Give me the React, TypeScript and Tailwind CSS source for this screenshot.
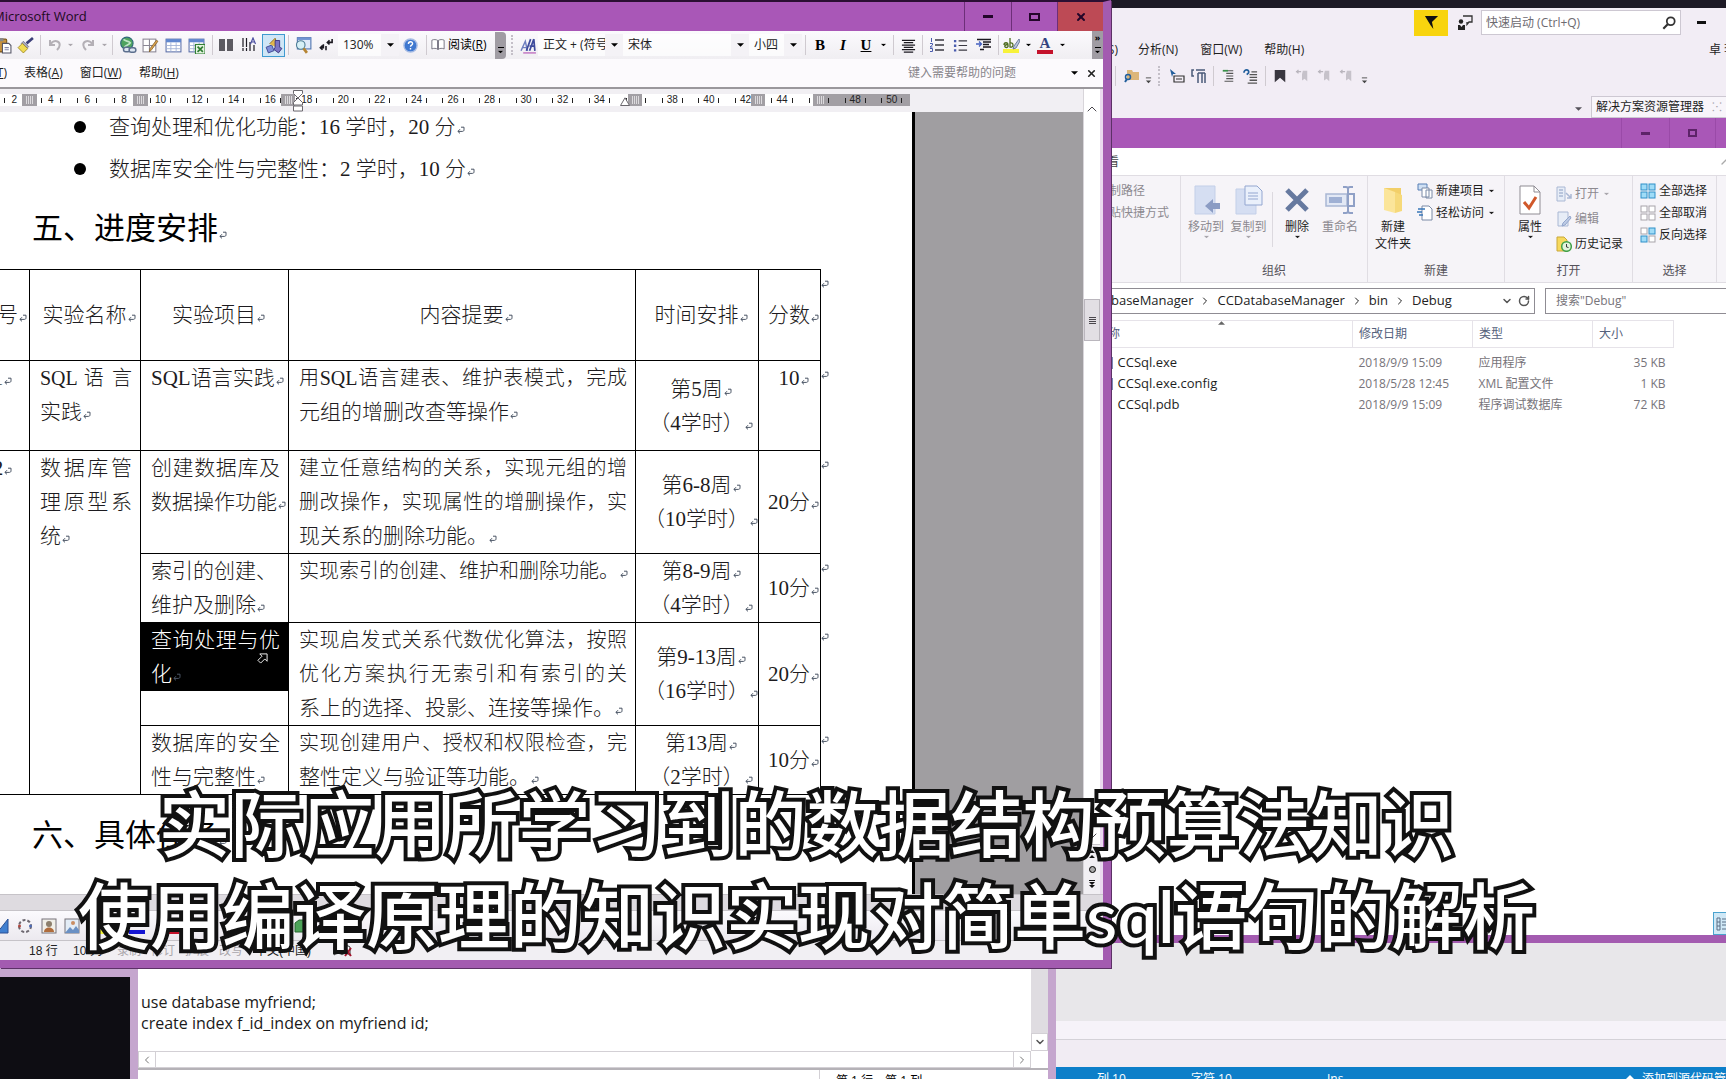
import React from "react";
import { Search, X, ChevronDown, ChevronUp, ChevronLeft, ChevronRight, RotateCw } from "lucide-react";

type Kids = { children?: React.ReactNode; className?: string };

const Svg = ({ children, className = "h-4 w-4", box = "0 0 16 16" }: Kids & { box?: string }) => (
  <svg viewBox={box} className={"shrink-0 " + className} fill="none" aria-hidden="true">
    {children}
  </svg>
);

const Caret = ({ className = "text-black" }: Kids) => (
  <svg viewBox="0 0 8 4" className={"h-1 w-[7px] shrink-0 " + className} aria-hidden="true">
    <path d="M0 0h8L4 4z" fill="currentColor" />
  </svg>
);

/* Paragraph mark shown after each paragraph */
const Mark = () => (
  <svg viewBox="0 0 8 8" className="-mr-2 ml-px inline-block h-2 w-2 align-baseline text-gray-600" fill="none" aria-hidden="true">
    <path d="M4 1.2h3v2.6c0 1-.6 1.6-1.6 1.6H1M3 3.2L.9 5.4 3 7.4" stroke="currentColor" strokeWidth="1" />
  </svg>
);

/* ---------- Word toolbar ---------- */

const Sep = ({ className = "w-2" }: Kids) => (
  <span className={"flex h-5 shrink-0 justify-center " + className}>
    <span className="w-px bg-[#cfcad0]" />
  </span>
);

const Tool = ({ label, className, children }: Kids & { label: string }) => (
  <button aria-label={label} className={"flex h-[23px] shrink-0 items-center justify-center " + className}>
    {children}
  </button>
);

const Undo = ({ flip = false }: { flip?: boolean }) => (
  <Svg className={flip ? "h-4 w-4 -scale-x-100" : "h-4 w-4"}>
    <path d="M3 3v5h5M3.5 7.5C5 4.500 8 3.500 10.500 4.500c3 1.300 3 5-.5 8.500" stroke="#b4b0b6" strokeWidth="2" />
  </Svg>
);

const Grid = ({ children }: Kids) => (
  <Svg className="h-[17px] w-[17px]">
    <rect x="1" y="2" width="14" height="12" fill="#fff" stroke="#5b6fa8" />
    <rect x="1" y="2" width="14" height="3" fill="#5f86cf" />
    <path d="M1 8h14M1 11h14M5.500 5v9M10.500 5v9" stroke="#9fb0d6" strokeWidth=".8" />
    {children}
  </Svg>
);

const Combo = ({ label, value, className }: { label: string; value: string; className: string }) => (
  <label className={"relative flex h-[22px] shrink-0 items-center " + className}>
    <select aria-label={label} className="h-full w-full appearance-none bg-white/70 pl-[5px] text-[12px] text-[#222] outline-none">
      <option>{value}</option>
    </select>
    <span className="pointer-events-none absolute inset-y-0 right-0 flex w-[18px] items-center justify-center bg-[#f4f2f6]">
      <Caret />
    </span>
  </label>
);

function WordToolbar() {
  return (
    <div className="flex h-[28px] items-center overflow-hidden bg-gradient-to-b from-[#fbfafd] to-[#f0eef2]">
      <Tool label="粘贴" className="w-[14px]">
        <Svg className="-ml-2 h-[17px] w-[17px]">
          <rect x="1" y="2" width="10" height="12" rx="1" fill="#c8923c" stroke="#7a5618" />
          <rect x="4" y="1" width="4" height="3" fill="#888" />
          <path d="M7 6h6l2 2v7H7z" fill="#fff" stroke="#556" />
          <path d="M9 10h4M9 12h4" stroke="#88a" />
        </Svg>
      </Tool>
      <Tool label="格式刷" className="w-[22px]">
        <Svg className="h-[17px] w-[17px]">
          <path d="M15 1l-6 5" stroke="#3b3f78" strokeWidth="2.500" />
          <path d="M6 4l5 5-2 2-5-5z" fill="#aab" stroke="#557" strokeWidth=".6" />
          <path d="M5 6l5 5-4 4-5-5z" fill="#f1dc55" stroke="#9c8524" strokeWidth=".8" />
        </Svg>
      </Tool>
      <Sep />
      <Tool label="撤消" className="w-[21px]"><Undo /></Tool>
      <Tool label="撤消列表" className="w-[10px]"><Caret className="scale-75 text-[#aaa6ac]" /></Tool>
      <Tool label="恢复" className="w-[25px]"><Undo flip /></Tool>
      <Tool label="恢复列表" className="w-[8px]"><Caret className="scale-75 text-[#aaa6ac]" /></Tool>
      <Sep />
      <Tool label="插入超链接" className="w-[23px]">
        <Svg className="h-[18px] w-[18px]">
          <circle cx="7" cy="6.500" r="5.500" fill="#4fa35f" stroke="#2f6a7a" />
          <path d="M4 3c2 2 4 1 6 3-1 2-4 2-5 4" stroke="#bfe6c6" strokeWidth="1.500" />
          <rect x="4" y="10" width="6" height="4" rx="2" stroke="#5c6f8e" strokeWidth="1.300" fill="#dde6f2" />
          <rect x="9" y="10.500" width="6" height="4" rx="2" stroke="#5c6f8e" strokeWidth="1.300" fill="#dde6f2" />
        </Svg>
      </Tool>
      <Tool label="表格和边框" className="w-[23px]">
        <Svg className="h-[17px] w-[17px]">
          <rect x="1" y="2" width="12" height="12" fill="#fff" stroke="#8a8694" />
          <path d="M7 2v12M1 8h12" stroke="#8a8694" />
          <path d="M15 4l-6 8-2 2 .5-3 6-8z" fill="#dba34e" stroke="#7d5a22" strokeWidth=".7" />
        </Svg>
      </Tool>
      <Tool label="插入表格" className="w-[23px]"><Grid /></Tool>
      <Tool label="插入 Excel 工作表" className="w-[23px]">
        <Grid>
          <rect x="7" y="7" width="9" height="9" fill="#e4f3e0" stroke="#2e7d32" />
          <path d="M9 9l5 5M14 9l-5 5" stroke="#2e7d32" strokeWidth="1.600" />
        </Grid>
      </Tool>
      <Sep />
      <Tool label="分栏" className="w-[20px]">
        <Svg>
          <path d="M1 3h6M1 5h6M1 7h6M1 9h6M1 11h6M1 13h6M9 3h6M9 5h6M9 7h6M9 9h6M9 11h6M9 13h6" stroke="#2a2830" strokeWidth="1.300" />
        </Svg>
      </Tool>
      <Tool label="文字方向" className="w-[26px]">
        <Svg>
          <path d="M2 1v13M5.500 1v13M9 5v9M13 8v6" stroke="#1c1a22" strokeWidth="1.200" strokeDasharray="9 1" />
          <path d="M9.500 7l2.500-6 2.500 6M10.500 5h3" stroke="#4b4fa0" strokeWidth="1.200" />
        </Svg>
      </Tool>
      <Tool label="绘图" className="w-[23px] border border-[#3f9bd0] bg-[#cfe6f6]">
        <Svg className="h-[18px] w-[18px]">
          <path d="M1 10l5-2 2 5-5 2z" fill="#7f8fd8" stroke="#3c4690" strokeWidth=".8" />
          <path d="M4 7l5-5 3 9" fill="#e2b84c" stroke="#8a6a20" strokeWidth=".8" />
          <path d="M9 4h4v6l2 1-3 4-4-3 1-2z" fill="#7b74c4" stroke="#3a347e" strokeWidth=".8" />
        </Svg>
      </Tool>
      <Sep className="w-[6px]" />
      <Tool label="文档结构图" className="w-[23px]">
        <Svg className="h-[18px] w-[18px]">
          <rect x="3" y="1.500" width="12" height="10" fill="#dfeafa" stroke="#5276b0" />
          <rect x="3" y="1.500" width="12" height="2" fill="#6f93d2" />
          <circle cx="6" cy="8" r="3.800" fill="#d6f0f6" stroke="#4f7f96" />
          <path d="M8.500 11l3 4" stroke="#b58432" strokeWidth="2.400" />
        </Svg>
      </Tool>
      <Tool label="显示编辑标记" className="w-[24px]">
        <Svg className="h-[14px] w-[14px]">
          <path d="M15 1v4h-4M12 2.500L9.500 5 12 7.500M5 7v4H1.500M4 8.500L1.500 11 4 13.500M8 9v5" stroke="#1b1920" strokeWidth="1.800" />
        </Svg>
      </Tool>
      <Combo label="显示比例" value="130%" className="w-[61px]" />
      <Tool label="帮助" className="w-[22px]">
        <Svg className="h-[15px] w-[15px]">
          <circle cx="8" cy="8" r="7" fill="#3f78d0" stroke="#a7bce4" strokeWidth="1.500" />
          <path d="M5.800 6.300c0-3 4.600-3 4.400-.2-.1 1.500-2.200 1.600-2.200 3.200M8 10.600v1.600" stroke="#fff" strokeWidth="1.500" />
        </Svg>
      </Tool>
      <Sep className="w-[10px]" />
      <button className="flex h-[23px] w-[64px] shrink-0 items-center gap-[3px] text-[12px]">
        <Svg className="h-[14px] w-[14px]">
          <path d="M8 3C6 1.500 3 1.500 1 2.500v10c2-1 5-1 7 .5 2-1.500 5-1.500 7-.5v-10c-2-1-5-1-7 .5z" fill="#fff" stroke="#6c6a78" />
          <path d="M8 3v10" stroke="#6c6a78" strokeWidth="2" />
        </Svg>
        <span>阅读(<u>R</u>)</span>
      </button>
      <Tool label="工具栏选项" className="h-[27px]! w-[11px] items-end! rounded-r bg-[#a09ca3] pb-[5px]">
        <span className="flex flex-col items-center gap-[2px]">
          <span className="h-px w-[6px] bg-black" />
          <Caret className="scale-75" />
        </span>
      </Tool>
      <span className="mx-[5px] h-5 w-0 shrink-0 border-l-2 border-dotted border-[#c4bfc8]" />
      <Tool label="样式和格式" className="w-[20px]">
        <Svg className="h-[17px] w-[17px]">
          <path d="M1 13l4-9 2 9M2.500 10H7" stroke="#6f7fc0" strokeWidth="1.400" />
          <path d="M6 13l4-11M9 13l4-11M13 2l1 11M9 8.500h5" stroke="#3d4a9c" strokeWidth="1.600" />
          <path d="M3 15h12" stroke="#b04ab0" />
        </Svg>
      </Tool>
      <Combo label="样式" value="正文 + (符号" className="w-[85px]" />
      <Combo label="字体" value="宋体" className="w-[126px]" />
      <Combo label="字号" value="小四" className="w-[53px]" />
      <Sep className="w-[6px]" />
      <Tool label="加粗" className="w-[24px]"><b className="font-['Liberation_Serif',serif] text-[15px]">B</b></Tool>
      <Tool label="倾斜" className="w-[22px]"><b className="font-['Liberation_Serif',serif] text-[15px] italic">I</b></Tool>
      <Tool label="下划线" className="w-[24px]"><b className="font-['Liberation_Serif',serif] text-[15px] underline">U</b></Tool>
      <Tool label="下划线样式" className="w-[10px]"><Caret className="scale-75" /></Tool>
      <Sep className="w-[10px]" />
      <Tool label="居中" className="w-[20px]">
        <Svg className="h-[15px] w-[15px]"><path d="M1 2.500h14M3 5h10M1 7.500h14M3 10h10M1 12.500h14M3 15h10" stroke="#1b1920" strokeWidth="1.300" /></Svg>
      </Tool>
      <Sep className="w-[8px]" />
      <Tool label="编号" className="w-[22px]">
        <Svg>
          <path d="M6 3h9M6 8h9M6 13h9" stroke="#3a3842" strokeWidth="1.300" />
          <path d="M2.500 1v4M1 6.500h2.500v1.500L1 10h2.500M1 11.500h2.500v3H1" stroke="#4a5cae" />
        </Svg>
      </Tool>
      <Tool label="项目符号" className="w-[24px]">
        <Svg className="h-[15px] w-[15px]">
          <path d="M6 3h9M6 8h9M6 13h9" stroke="#3a3842" strokeWidth="1.300" />
          <path d="M1 2h2.500v2.500H1zM1 7h2.500v2.500H1zM1 12h2.500v2.500H1z" fill="#4a5cae" />
        </Svg>
      </Tool>
      <Tool label="增加缩进量" className="w-[24px]">
        <Svg>
          <path d="M1 2.500h14M7 5h8M7 7.500h6M7 10h8M4 12.500h4" stroke="#1b1920" strokeWidth="1.500" />
          <path d="M0 7h5M3 4.500L5.500 7 3 9.500" stroke="#4560c0" strokeWidth="1.300" />
        </Svg>
      </Tool>
      <Sep className="w-[4px]" />
      <Tool label="突出显示" className="w-[22px]">
        <Svg className="h-[18px] w-[18px]" box="0 0 18 18">
          <rect x="1" y="13" width="16" height="4" fill="#f7f23a" />
          <path d="M2 9c0-3 4-3 4 0v2M6 8.500c-4 0-4 3-1.500 3 1 0 1.500-.8 1.500-1.500M8 2v9c4 1 4-5 0-4" stroke="#4d6b1f" strokeWidth="1.300" />
          <path d="M17 3l-5 7-1 3 3-1 4-7z" fill="#b9c6e0" stroke="#56658c" strokeWidth=".8" />
        </Svg>
      </Tool>
      <Tool label="突出显示颜色" className="w-[12px]"><Caret className="scale-75" /></Tool>
      <Tool label="字体颜色" className="w-[22px]">
        <span className="flex flex-col items-center">
          <b className="h-[13px] font-['Liberation_Serif',serif] text-[15px] leading-[13px] text-[#33437f]">A</b>
          <span className="h-1 w-4 bg-[#c4122b]" />
        </span>
      </Tool>
      <Tool label="字体颜色列表" className="w-[12px]"><Caret className="scale-75" /></Tool>
      <Tool label="更多按钮" className="ml-auto h-[28px]! w-[11px] flex-col justify-between! bg-[#a09ca3] py-[5px]">
        <span className="text-[9px] leading-[4px] font-bold">»</span>
        <span className="flex flex-col items-center gap-[2px]">
          <span className="h-px w-[6px] bg-black" />
          <Caret className="scale-75" />
        </span>
      </Tool>
    </div>
  );
}

/* ---------- Ruler ---------- */

const ticks = Array.from({ length: 25 }, (_, i) => (i + 1) * 2);
const hiddenTicks = [36, 46];

const ColMark = ({ className }: Kids) => (
  <span className={"absolute inset-y-0 flex items-center justify-center gap-px bg-[#a29fa4] " + className}>
    {[0, 1, 2, 3].map((n) => (
      <span key={n} className="h-2 w-px bg-[#dcdadd]" />
    ))}
  </span>
);

function Ruler() {
  return (
    <div className="h-[23px] shrink-0 bg-[#f1eff3] pt-[5px]">
      <div className="relative -ml-1 grid h-[12px] w-[914px] grid-cols-25 bg-white font-['Liberation_Sans',sans-serif] text-[10px] leading-[12px] text-[#222]">
        <span className="absolute inset-y-0 right-0 w-[97px] bg-[#a29fa4]" />
        {ticks.map((n) => (
          <span key={n} className="relative flex items-center justify-center gap-[4px]">
            <i className="h-[5px] w-px bg-[#222]" />
            <span className="min-w-[10px] text-center">{hiddenTicks.includes(n) ? "" : n}</span>
            <i className="h-[5px] w-px bg-[#222]" />
          </span>
        ))}
        <ColMark className="left-[26px] w-[15px]" />
        <ColMark className="left-[137px] w-[15px]" />
        <ColMark className="left-[285px] w-[14px]" />
        <ColMark className="left-[632px] w-[14px]" />
        <ColMark className="left-[755px] w-[14px]" />
        <ColMark className="left-[817px] w-[14px]" />
        <svg viewBox="0 0 10 22" className="absolute -top-[4px] left-[297px] h-[22px] w-[10px]" fill="#fff" stroke="#6b686e" aria-hidden="true">
          <path d="M.5.500h9v3L5 8 .5 3.500zM5 8l4.500 4.500V15h-9v-2.500zM.5 16h9v5h-9z" />
        </svg>
        <svg viewBox="0 0 10 9" className="absolute top-[3px] left-[624px] h-[9px] w-[10px]" fill="#fff" stroke="#6b686e" aria-hidden="true">
          <path d="M.5 8.500L5 .800l4.500 7.700z" />
        </svg>
      </div>
    </div>
  );
}

/* ---------- Document ---------- */

const Full = ({ children, tight = false }: Kids & { tight?: boolean }) => (
  <span className={tight ? "block text-justify text-[20px] whitespace-nowrap [text-align-last:justify]" : "block text-justify [text-align-last:justify]"}>
    {children}
  </span>
);
const Last = ({ children }: Kids) => (
  <span className="block whitespace-nowrap">
    {children}
    <Mark />
  </span>
);

const Cell = ({ children, className = "", rowSpan }: Kids & { rowSpan?: number }) => (
  <td rowSpan={rowSpan} className={"border border-black py-0 pr-[8px] pl-[10px] " + className}>
    {children}
  </td>
);

const Score = ({ children, className = "align-middle" }: Kids) => (
  <td className={"relative border border-black p-0 text-center whitespace-nowrap " + className}>
    {children}
    <Mark />
    <span className="absolute -top-[6px] left-full"><Mark /></span>
  </td>
);

const Weeks = ({ week, hours }: { week: string; hours: string }) => (
  <td className="border border-black p-0 text-center align-middle whitespace-nowrap">
    <span className="block">{week}<Mark /></span>
    <span className="block">（{hours}）<Mark /></span>
  </td>
);

const Head = ({ children }: Kids) => (
  <th className="border border-black p-0 text-center font-light whitespace-nowrap">
    {children}
    <Mark />
  </th>
);

function Doc() {
  return (
    <article className="flex w-[912px] shrink-0 flex-col overflow-hidden bg-white font-['Liberation_Serif','Noto_Sans_CJK_SC',serif] text-[21px] font-light text-[#1d1b20]">
      <ul className="-mt-[6px] pl-[74px] leading-[42px]">
        {["查询处理和优化功能：16 学时，20 分", "数据库安全性与完整性：2 学时，10 分"].map((t) => (
          <li key={t} className="flex items-center">
            <span className="mr-[23px] h-3 w-3 rounded-full bg-black" />
            <span>{t}<Mark /></span>
          </li>
        ))}
      </ul>
      <h2 className="mt-4 pl-8 text-[31px] leading-[46px] font-normal text-black">五、进度安排<Mark /></h2>
      <table className="mt-[17px] -ml-[35px] w-[856px] table-fixed border-collapse text-left align-top leading-[34px]">
        <colgroup>
          <col className="w-[64px]" /><col className="w-[111px]" /><col className="w-[148px]" />
          <col className="w-[347px]" /><col className="w-[123px]" /><col className="w-[62px]" />
        </colgroup>
        <thead>
          <tr className="h-[91px]">
            <Head>序号</Head><Head>实验名称</Head><Head>实验项目</Head><Head>内容提要</Head><Head>时间安排</Head>
            <th className="relative border border-black p-0 text-center font-light whitespace-nowrap">
              分数<Mark />
              <span className="absolute -top-[6px] left-full"><Mark /></span>
            </th>
          </tr>
        </thead>
        <tbody className="align-top">
          <tr className="h-[90px]">
            <Cell className="text-center">1<Mark /></Cell>
            <Cell><Full tight>SQL 语 言</Full><Last>实践</Last></Cell>
            <Cell><Last>SQL语言实践</Last></Cell>
            <Cell><Full tight>用SQL语言建表、维护表模式，完成</Full><Last>元组的增删改查等操作</Last></Cell>
            <Weeks week="第5周" hours="4学时" />
            <Score className="align-top">10</Score>
          </tr>
          <tr className="h-[103px]">
            <Cell rowSpan={4} className="text-center">2<Mark /></Cell>
            <Cell rowSpan={4}><Full>数据库管</Full><Full>理原型系</Full><Last>统</Last></Cell>
            <Cell><Full>创建数据库及</Full><Last>数据操作功能</Last></Cell>
            <Cell>
              <Full tight>建立任意结构的关系，实现元组的增</Full>
              <Full tight>删改操作，实现属性的增删操作，实</Full>
              <Last>现关系的删除功能。</Last>
            </Cell>
            <Weeks week="第6-8周" hours="10学时" />
            <Score>20分</Score>
          </tr>
          <tr className="h-[69px]">
            <Cell><span className="block">索引的创建、</span><Last>维护及删除</Last></Cell>
            <Cell><span className="block text-[20px] whitespace-nowrap">实现索引的创建、维护和删除功能。<Mark /></span></Cell>
            <Weeks week="第8-9周" hours="4学时" />
            <Score>10分</Score>
          </tr>
          <tr className="h-[103px]">
            <Cell>
              <div className="relative -mr-[8px] -ml-[10px] bg-black pr-[8px] pl-[10px] text-white">
                <Full>查询处理与优</Full>
                <Last>化</Last>
                <svg viewBox="0 0 12 12" className="absolute top-[30px] right-[20px] h-[11px] w-[11px]" fill="#000" stroke="#fff" aria-hidden="true">
                  <path d="M3 1h8v8L8.500 6.500 4 11 1 8l4.500-4.500z" />
                </svg>
              </div>
            </Cell>
            <Cell>
              <Full tight>实现启发式关系代数优化算法，按照</Full>
              <Full tight>优化方案执行无索引和有索引的关</Full>
              <Last>系上的选择、投影、连接等操作。</Last>
            </Cell>
            <Weeks week="第9-13周" hours="16学时" />
            <Score>20分</Score>
          </tr>
          <tr className="h-[69px]">
            <Cell><Full>数据库的安全</Full><Last>性与完整性</Last></Cell>
            <Cell><Full tight>实现创建用户、授权和权限检查，完</Full><Last>整性定义与验证等功能。</Last></Cell>
            <Weeks week="第13周" hours="2学时" />
            <Score>10分</Score>
          </tr>
        </tbody>
      </table>
      <h2 className="mt-[18px] pl-8 text-[31px] leading-[46px] font-normal text-black">六、具体任务<Mark /></h2>
    </article>
  );
}

/* ---------- Word window ---------- */

const WinButton = ({ label, className, children }: Kids & { label: string }) => (
  <button aria-label={label} className={"flex h-full items-center justify-center border-l border-[#6d2f78] " + className}>
    {children}
  </button>
);

function WordWindow() {
  return (
    <section className="absolute top-0 left-0 flex h-[968px] w-[1111px] flex-col border-t-2 border-r-8 border-b-8 border-t-[#2b0f33] border-r-[#a35bb0] border-b-[#a35bb0] bg-[#f6f3f8] shadow-[1px_1px_0_#5c3166]">
      <header className="flex h-[29px] shrink-0 items-center bg-[#a957b7]">
        <h1 className="-ml-[7px] flex-1 text-[13px] text-[#1c0a20]">Microsoft Word</h1>
        <WinButton label="最小化" className="w-[47px]"><span className="h-[3px] w-[10px] bg-[#23062a]" /></WinButton>
        <WinButton label="最大化" className="w-[46px]"><span className="h-[8px] w-[11px] border-2 border-[#23062a]" /></WinButton>
        <WinButton label="关闭" className="w-[46px] bg-[#bd4a55]"><X className="h-3 w-3 text-[#23062a]" strokeWidth={4} /></WinButton>
      </header>
      <WordToolbar />
      <nav className="flex h-[28px] shrink-0 items-center bg-[#fcfafd] text-[12px] text-[#222]">
        <button className="w-[7px] shrink-0 overflow-hidden"><span className="float-right whitespace-nowrap">工具(<u>T</u>)</span></button>
        <button className="ml-[17px]">表格(<u>A</u>)</button>
        <button className="ml-[17px]">窗口(<u>W</u>)</button>
        <button className="ml-[17px]">帮助(<u>H</u>)</button>
        <input aria-label="帮助问题" placeholder="键入需要帮助的问题" className="ml-auto w-[163px] bg-transparent outline-none placeholder:text-[#88858b]" />
        <Caret />
        <button aria-label="关闭文档" className="mr-[6px] ml-[8px]"><X className="h-[11px] w-[11px]" strokeWidth={3.500} /></button>
      </nav>
      <div className="flex min-h-0 flex-1 border-t-2 border-[#9a979c]">
        <div className="flex min-w-0 flex-1 flex-col">
          <Ruler />
          <div className="flex min-h-0 flex-1 bg-[#a09ea1]">
            <Doc />
            <div className="w-[3px] bg-black" />
          </div>
        </div>
        <div className="flex w-[17px] flex-col items-center border-l border-[#d8d5da] bg-white pt-3 text-[#4a474d]">
          <ChevronUp className="h-4 w-4" strokeWidth={1.500} />
          <div className="mt-[182px] flex h-[42px] w-full flex-col items-center justify-center gap-px border border-[#bab6bd] bg-[#e2dfe4]">
            {[0, 1, 2, 3].map((n) => <span key={n} className="h-px w-[7px] bg-[#4a474d]" />)}
          </div>
          <ChevronDown className="mt-auto h-4 w-4" strokeWidth={1.500} />
          <div className="flex w-full flex-col items-center gap-[5px] border-t border-[#c9c6cb] bg-[#f1eff3] py-1 text-black">
            <Svg className="h-3 w-3" box="0 0 12 12"><path d="M6 1l3 3H3zM6 6l3 3H3z" fill="#111" /></Svg>
            <span className="h-[7px] w-[7px] rounded-full border border-black bg-[#aaa]" />
            <Svg className="h-3 w-3" box="0 0 12 12"><path d="M3 2h6v1H3zM3 4h6L6 7zM3 7h6l-3 3z" fill="#111" /></Svg>
          </div>
        </div>
        <div className="w-[3px] bg-[#ead9ef]" />
      </div>
      <div className="h-[17px] shrink-0 border-y border-[#c6c3c8] bg-[#dedbe0]" />
      <div className="flex h-[29px] shrink-0 items-center overflow-hidden bg-gradient-to-b from-[#fbfafd] to-[#ece9ef]">
        <Tool label="艺术字" className="w-[12px]"><Svg className="-ml-2 h-4 w-4"><path d="M14 1v14H3z" fill="#3f7fd0" stroke="#2a4f94" /></Svg></Tool>
        <Tool label="图示" className="w-[26px]">
          <Svg>
            <circle cx="8" cy="8" r="6" stroke="#6d6870" strokeWidth="2" strokeDasharray="3 2" />
            <circle cx="2.500" cy="8" r="1.500" fill="#b2483f" /><circle cx="13.500" cy="8" r="1.500" fill="#4f6cb5" />
          </Svg>
        </Tool>
        <Tool label="剪贴画" className="w-[22px]">
          <Svg>
            <rect x="1" y="1" width="14" height="14" fill="#f1efe8" stroke="#77727a" />
            <circle cx="8" cy="6" r="3" fill="#8c7f6c" /><path d="M3 14c0-6 10-6 10 0z" fill="#b06c3c" />
          </Svg>
        </Tool>
        <Tool label="图片" className="w-[24px]">
          <Svg>
            <rect x="1" y="1" width="14" height="14" fill="#e3ecf6" stroke="#77727a" />
            <path d="M1 15l5-6 3 3 3-4 3 4v3z" fill="#6a90c4" /><circle cx="9" cy="5" r="2" fill="#c98d62" />
          </Svg>
        </Tool>
        <Tool label="填充颜色" className="ml-2 w-[30px]"><span className="mt-3 h-1 w-4 bg-[#f4f43a]" /></Tool>
        <Tool label="线条颜色" className="w-[30px]"><span className="mt-3 h-1 w-4 bg-[#1414d2]" /></Tool>
        <Tool label="文字颜色" className="ml-1 w-[30px]"><span className="mt-3 h-1 w-4 bg-[#c4122b]" /></Tool>
        <Tool label="线型" className="ml-3 w-[22px]"><Svg><path d="M1 3h14" stroke="#222" /><path d="M1 7h14" stroke="#222" strokeWidth="2" /><path d="M1 12h14" stroke="#222" strokeWidth="3" /></Svg></Tool>
        <Tool label="三维效果" className="ml-[70px] w-[22px]"><Svg><path d="M2 5l4-3h8v9l-4 3H2z" fill="#4ca358" stroke="#27642f" /></Svg></Tool>
      </div>
      <footer className="flex h-[20px] shrink-0 items-center border-t border-[#c6c3c8] bg-[#f1eff3] pl-[29px] font-['Liberation_Sans','Noto_Sans_CJK_SC',sans-serif] text-[12px] whitespace-nowrap text-[#222]">
        <span className="w-[44px]">18 行</span>
        <span className="w-[44px]">10 列</span>
        <span className="w-[34px] text-[#aaa7ac]">录制</span>
        <span className="w-[34px] text-[#aaa7ac]">修订</span>
        <span className="w-[34px] text-[#aaa7ac]">扩展</span>
        <span className="w-[36px] text-[#aaa7ac]">改写</span>
        <span className="w-[78px]">中文(中国)</span>
        <Svg className="h-4 w-5" box="0 0 20 16">
          <path d="M1 12c3-2 6-2 8 0 2-2 5-2 8 0V4c-3-2-6-2-8 0-2-2-5-2-8 0z" fill="#fff" stroke="#333" />
          <path d="M12 5l6 8M18 5l-6 8" stroke="#a3122b" strokeWidth="2" />
        </Svg>
      </footer>
    </section>
  );
}

/* ---------- Visual Studio window ---------- */

function StudioWindow() {
  return (
    <section className="absolute top-0 right-0 -bottom-3 left-[1056px] flex flex-col bg-[#f2edf5] text-[12px] text-[#1e1e1e]">
      <div className="h-[8px] bg-[#1d1a26]" />
      <header className="flex h-[29px] items-center justify-end">
        <button aria-label="通知" className="flex h-[26px] w-[34px] items-center justify-center bg-[#f8d40e]">
          <Svg className="h-[15px] w-[15px]"><path d="M1 1h14L8.500 7.500 10 15 7 11z" fill="#111" /></Svg>
        </button>
        <button aria-label="反馈" className="flex w-[33px] justify-center">
          <Svg>
            <path d="M6 1h9v6h-3l-2 2.500V7" stroke="#333" strokeWidth="1.300" />
            <circle cx="4" cy="6.500" r="2.200" fill="#222" />
            <path d="M1 10h2l1.500 2L6 10h2v5H1z" fill="#222" />
          </Svg>
        </button>
        <label className="flex h-[25px] w-[200px] items-center border border-[#cdc8d2] bg-white px-[4px]">
          <input aria-label="快速启动" placeholder="快速启动 (Ctrl+Q)" className="min-w-0 flex-1 outline-none placeholder:text-[#6d6a70]" />
          <Svg className="h-[14px] w-[14px]"><circle cx="10" cy="6" r="4.500" stroke="#333" strokeWidth="2" /><path d="M6.800 9.200L1.500 14.500" stroke="#333" strokeWidth="2.500" /></Svg>
        </label>
        <button aria-label="最小化" className="mr-[20px] ml-4 h-[3px] w-[9px] bg-[#111]" />
      </header>
      <nav className="flex h-[26px] items-center">
        <button className="ml-[56px] w-[6px] overflow-hidden"><span className="float-right">(S)</span></button>
        <button className="ml-[20px]">分析(N)</button>
        <button className="ml-[22px]">窗口(W)</button>
        <button className="ml-[22px]">帮助(H)</button>
        <span className="-mr-[5px] ml-auto w-[22px] overflow-hidden whitespace-nowrap">卓 李</span>
      </nav>
      <div className="flex h-[26px] items-center pl-[56px]">
        <Sep className="w-[6px]" />
        <Tool label="在文件中查找" className="ml-[2px] w-[24px]">
          <Svg><path d="M3 2h5l1 2h6v8H3z" fill="#dcb679" /><circle cx="4" cy="9" r="2.500" stroke="#235f9c" strokeWidth="1.500" /><path d="M3 11l-2 3" stroke="#235f9c" strokeWidth="2" /></Svg>
        </Tool>
        <Tool label="选项" className="w-[8px]"><Svg className="mt-2 h-[7px] w-[7px]" box="0 0 8 8"><path d="M1 1h6" stroke="#444" /><path d="M1 4h6L4 7z" fill="#444" /></Svg></Tool>
        <span className="mx-[6px] h-5 border-l-2 border-dotted border-[#c4bfc8]" />
        <Tool label="成员列表" className="w-[21px]">
          <Svg><path d="M1 1l6 5H4l-1 3z" fill="#235f9c" /><path d="M5 8h10v6H5zM7 11h6" stroke="#333" strokeWidth="1.200" /></Svg>
        </Tool>
        <Tool label="参数信息" className="w-[22px]">
          <Svg><path d="M4 2H2v6h2M6 2h9M8 5h7M8 5v10M12 5v10M15 5v10" stroke="#4a5a78" strokeWidth="1.500" /></Svg>
        </Tool>
        <Sep className="w-[8px]" />
        <Tool label="注释" className="w-[22px]">
          <Svg className="h-[14px] w-[14px]"><path d="M2 2h6" stroke="#3b8f4a" strokeWidth="2" /><path d="M8 2h6M6 5h8M6 8h8M6 11h8M4 14h10" stroke="#555" strokeWidth="1.400" /></Svg>
        </Tool>
        <Tool label="取消注释" className="w-[22px]">
          <Svg className="h-[15px] w-[15px]"><path d="M1 4c0-4 6-4 5 0L4 6" stroke="#235f9c" strokeWidth="1.800" /><path d="M9 3h6M7 6h8M7 9h8M7 12h8M5 15h10" stroke="#555" strokeWidth="1.400" /></Svg>
        </Tool>
        <Sep className="w-[8px]" />
        <Tool label="书签" className="w-[22px]"><Svg className="h-[14px] w-[14px]"><path d="M2 1h12v14l-6-5-6 5z" fill="#39363f" /></Svg></Tool>
        {["上一书签", "下一书签", "清除书签"].map((t) => (
          <Tool key={t} label={t} className="w-[22px]">
            <Svg className="h-[14px] w-[14px]"><path d="M1 3h6M4 1L2 3l2 2" stroke="#b9b5bd" strokeWidth="1.500" /><path d="M9 2h5v12l-3-3-3 2V6z" fill="#c6c2ca" /></Svg>
          </Tool>
        ))}
        <Tool label="更多" className="w-[14px]"><Svg className="mt-2 h-[7px] w-[7px]" box="0 0 8 8"><path d="M1 1h6" stroke="#444" /><path d="M1 4h6L4 7z" fill="#444" /></Svg></Tool>
      </div>
      <div className="flex h-[29px] items-end justify-end">
        <Caret className="mr-[9px] mb-[7px] text-[#55525a]" />
        <div className="flex h-[22px] w-[135px] items-center gap-2 border border-r-0 border-[#cdc8d2] bg-[#f8f5fa] pl-1 whitespace-nowrap">
          解决方案资源管理器
          <span className="text-[#a5a1a9]">⁙</span>
        </div>
      </div>
      <div className="flex-1 bg-[#e8e7ea]" />
      <div className="h-[18px] bg-[#f6f3f9]" />
      <div className="h-[28px] border-t border-[#d4d2d8] bg-[#f1ecf3]" />
      <footer className="flex h-6 items-center bg-[#0d7fc9] text-[12px] whitespace-nowrap text-white">
        <span className="ml-[41px] w-[94px]">列 10</span>
        <span className="w-[136px]">字符 10</span>
        <span>Ins</span>
        <span className="-mr-[16px] ml-auto flex w-[116px] items-center gap-2">
          <Svg className="h-2 w-2" box="0 0 8 8"><path d="M4 0l4 4H6v4H2V4H0z" fill="#fff" /></Svg>
          添加到源代码管理
        </span>
      </footer>
    </section>
  );
}

/* ---------- File Explorer window ---------- */

const Big = ({ label, icon, className = "", caret, muted }: { label: React.ReactNode; icon: React.ReactNode; className?: string; caret?: boolean; muted?: boolean }) => (
  <button className={"flex shrink-0 flex-col items-center pt-2 leading-[17px] whitespace-nowrap " + (muted ? "text-[#8d8a90] " : "text-[#1e1e1e] ") + className}>
    <span className="mb-[3px] flex h-[31px] items-center">{icon}</span>
    <span>{label}</span>
    {caret && <Caret className={muted ? "scale-75 text-[#a9a6ac]" : "scale-75"} />}
  </button>
);

const Small = ({ label, icon, caret, muted }: { label: string; icon: React.ReactNode; caret?: boolean; muted?: boolean }) => (
  <button className={"flex h-[22px] items-center gap-[3px] whitespace-nowrap " + (muted ? "text-[#8d8a90]" : "text-[#1e1e1e]")}>
    {icon}
    <span>{label}</span>
    {caret && <Caret className={muted ? "ml-px scale-75 text-[#a9a6ac]" : "ml-px scale-75"} />}
  </button>
);

const Group = ({ name, className, children }: Kids & { name: string }) => (
  <div className={"flex shrink-0 flex-col border-r border-[#e0dde3] " + className}>
    <div className="flex flex-1">{children}</div>
    <div className="h-[20px] text-center text-[#55525a]">{name}</div>
  </div>
);

const Tiles = ({ fill }: { fill: boolean[] }) => (
  <Svg>
    {fill.map((on, i) => (
      <rect key={i} x={i % 2 ? 9 : 1} y={i > 1 ? 9 : 1} width="6" height="6" fill={on ? "#9fdcf7" : "#fff"} stroke={on ? "#2f8fc8" : "#a7a4aa"} />
    ))}
  </Svg>
);

const files = [
  ["CCSql.exe", "2018/9/9 15:09", "应用程序", "35 KB"],
  ["CCSql.exe.config", "2018/5/28 12:45", "XML 配置文件", "1 KB"],
  ["CCSql.pdb", "2018/9/9 15:09", "程序调试数据库", "72 KB"],
];

function ExplorerWindow() {
  return (
    <section className="absolute top-[118px] right-0 bottom-[136px] left-[1099px] flex flex-col overflow-hidden border-b-8 border-[#a35bb0] bg-white text-[12px]">
      <header className="flex h-[30px] shrink-0 justify-end bg-[#a957b7]">
        <button aria-label="最小化" className="flex w-[48px] items-center justify-center border-l border-[#9a4aa8]"><span className="h-[3px] w-[9px] bg-[#5d2368]" /></button>
        <button aria-label="最大化" className="flex w-[46px] items-center justify-center border-l border-[#9a4aa8]"><span className="h-[8px] w-[9px] border-2 border-[#5d2368]" /></button>
        <div className="w-[11px] border-l border-[#9a4aa8]" />
      </header>
      <div className="flex h-[27px] shrink-0 items-center justify-between text-[#444]">
        <button className="-ml-[4px]">查看</button>
        <ChevronUp className="-mr-2 h-4 w-4 text-[#aaa]" />
      </div>
      <div className="flex h-[108px] shrink-0 border-y border-[#e0dde3] bg-[#f6f4f8]">
        <Group name="" className="w-[82px]">
          <div className="-ml-[2px] pt-1">
            <Small muted label="复制路径" icon={null} />
            <Small muted label="粘贴快捷方式" icon={null} />
          </div>
        </Group>
        <Group name="组织" className="w-[187px]">
          <Big muted caret className="ml-1 w-[42px]" label="移动到" icon={
            <Svg className="h-[30px] w-[28px]" box="0 0 28 30"><path d="M3 1h20v28H3z" fill="#d5def2" stroke="#c3cfe8" /><path d="M13 21l8-7v4h7v6h-7v4z" fill="#8b9cc4" /></Svg>
          } />
          <Big muted caret className="w-[43px]" label="复制到" icon={
            <Svg className="h-[30px] w-[28px]" box="0 0 28 30"><path d="M1 4h20v25H1z" fill="#d5def2" stroke="#c3cfe8" /><path d="M10 1h12l5 5v14H10zM13 8h10M13 11h10M13 14h10" fill="#eaf0fb" stroke="#93a6d0" /></Svg>
          } />
          <span className="mx-[2px] mt-4 h-[55px] w-px bg-[#dcd9df]" />
          <Big caret className="w-[44px]" label="删除" icon={
            <Svg className="h-[26px] w-[26px]" box="0 0 26 26"><path d="M3 3l20 20M23 3L3 23" stroke="#66799f" strokeWidth="5" /></Svg>
          } />
          <Big muted className="w-[42px]" label="重命名" icon={
            <Svg className="h-[28px] w-[30px]" box="0 0 30 28"><path d="M1 8h21v12H1z" fill="#e2e8f5" stroke="#a9b6d3" strokeWidth="1.500" /><path d="M4 11h13v6H4z" fill="#9fb0d4" /><path d="M18 1h3q2 0 2 2v22q0 2-2 2h-3M28 1h-3q-2 0-2 2v22q0 2 2 2h3M23 8h6v12h-6" stroke="#8fa0c6" strokeWidth="2" /></Svg>
          } />
        </Group>
        <Group name="新建" className="w-[137px]">
          <Big className="ml-1 w-[42px]" label={<>新建<br />文件夹</>} icon={
            <Svg className="h-[28px] w-[22px]" box="0 0 22 28"><path d="M2 2h17v22H2z" fill="#f2cf69" /><path d="M2 2l11 4v21L2 24z" fill="#fbe59a" /><path d="M13 6l7 3v16l-7 2z" fill="#f6d97a" /></Svg>
          } />
          <div className="ml-[3px] pt-1">
            <Small caret label="新建项目" icon={<Svg><path d="M1 1h9v6H1z" fill="#cfe0f4" stroke="#567fb5" /><path d="M5 5h7v9H5zM9 7h6v8H9z" fill="#fff" stroke="#7a8aa6" /></Svg>} />
            <Small caret label="轻松访问" icon={<Svg><path d="M5 1h7l3 3v11H5z" fill="#fff" stroke="#7a8aa6" /><path d="M1 4h7M0 7h5M2 10h4" stroke="#3877b8" strokeWidth="1.500" /></Svg>} />
          </div>
        </Group>
        <Group name="打开" className="w-[128px]">
          <Big caret className="ml-1 w-[42px]" label="属性" icon={
            <Svg className="h-[30px] w-[22px]" box="0 0 22 30"><path d="M1 1h14l6 6v22H1z" fill="#fff" stroke="#8f8c93" /><path d="M15 1v6h6" stroke="#8f8c93" /><path d="M5 17l5 6 7-11" stroke="#d0582a" strokeWidth="3" /></Svg>
          } />
          <div className="ml-[5px] flex flex-col gap-[3px] pt-[7px]">
            <Small muted caret label="打开" icon={<Svg><path d="M1 1h8v14H1z" fill="#e7edf7" stroke="#aab8d4" /><path d="M3 4h4M3 7h4M3 10h4" stroke="#aab8d4" strokeWidth="1.500" /><path d="M10 7l5 5M15 8v4h-4" stroke="#aab8d4" strokeWidth="1.500" /></Svg>} />
            <Small muted label="编辑" icon={<Svg><path d="M2 1h10v14H2z" fill="#e7edf7" stroke="#aab8d4" /><path d="M14 5l-7 7-1 3 3-1 6-7z" fill="#bccae4" stroke="#93a6cc" /></Svg>} />
            <Small label="历史记录" icon={<Svg><path d="M1 1h7l3 3v11H1z" fill="#f7d95e" stroke="#c9a83a" /><circle cx="10.500" cy="10.500" r="4.800" fill="#e2f3dc" stroke="#3fa046" strokeWidth="1.500" /><path d="M10.500 8v3l2 .500" stroke="#3a3a3a" /></Svg>} />
          </div>
        </Group>
        <Group name="选择" className="w-[84px]">
          <div className="ml-[7px] pt-1">
            <Small label="全部选择" icon={<Tiles fill={[true, true, true, true]} />} />
            <Small label="全部取消" icon={<Tiles fill={[false, false, false, false]} />} />
            <Small label="反向选择" icon={<Tiles fill={[false, true, true, false]} />} />
          </div>
        </Group>
      </div>
      <div className="mt-[5px] flex h-[26px] shrink-0 gap-[10px] text-[13px]">
        <div className="flex w-[436px] items-center border border-[#8f8c93] pr-[4px] pl-[11px] text-[#222]">
          <a href="#m">baseManager</a><ChevronRight className="mx-[6px] h-3 w-3" />
          <a href="#cc">CCDatabaseManager</a><ChevronRight className="mx-[6px] h-3 w-3" />
          <a href="#bin">bin</a><ChevronRight className="mx-[6px] h-3 w-3" />
          <a href="#debug">Debug</a>
          <ChevronDown className="ml-auto h-3 w-3 text-[#555]" strokeWidth={3} />
          <RotateCw className="ml-[5px] h-3 w-3 text-[#555]" strokeWidth={3} />
        </div>
        <input aria-label="搜索" placeholder='搜索"Debug"' className="-mr-1 min-w-0 flex-1 border border-[#8f8c93] pl-[10px] text-[12px] outline-none placeholder:text-[#77747a]" />
      </div>
      <table className="mt-[6px] w-[574px] table-fixed text-left text-[12px] text-[#77747a]">
        <colgroup><col className="w-[253px]" /><col className="w-[120px]" /><col className="w-[120px]" /><col className="w-[81px]" /></colgroup>
        <thead>
          <tr className="h-[27px] text-[#55617c]">
            <th className="relative border border-[#e6e3e9] font-normal">
              <span className="-ml-1">名称</span>
              <Svg className="absolute top-0 left-[118px] h-1 w-[7px]" box="0 0 8 4"><path d="M0 4h8L4 0z" fill="#666" /></Svg>
            </th>
            <th className="border border-[#e6e3e9] pl-[6px] font-normal">修改日期</th>
            <th className="border border-[#e6e3e9] pl-[6px] font-normal">类型</th>
            <th className="border border-[#e6e3e9] pl-[6px] font-normal">大小</th>
          </tr>
        </thead>
        <tbody>
          <tr className="h-[5px]" />
          {files.map(([name, date, kind, size]) => (
            <tr key={name} className="h-[21px] whitespace-nowrap">
              <td className="text-[13px] text-[#1e1e1e]">
                <span className="flex items-center gap-[5px]">
                  <span className={name.endsWith("pdb") ? "h-3 w-[13px]" : "h-3 w-[13px] border border-[#7c88b8]"} />
                  {name}
                </span>
              </td>
              <td className="pl-[6px]">{date}</td>
              <td className="pl-[6px]">{kind}</td>
              <td className="pr-2 text-right">{size}</td>
            </tr>
          ))}
        </tbody>
      </table>
      <button aria-label="详细信息视图" className="mt-auto -mr-2 flex h-[23px] w-[21px] shrink-0 items-center justify-center self-end border border-[#4aa3cf] bg-[#cfe8f6]">
        <Svg><path d="M1 2h3v12H1zM6 3h9M6 6h9M6 9h9M6 13h9M1 6h3M1 10h3" stroke="#5a6f86" /></Svg>
      </button>
    </section>
  );
}

/* ---------- Script editor window ---------- */

function EditorWindow() {
  return (
    <section className="absolute -bottom-[12px] left-[130px] flex h-[131px] w-[926px] flex-col border-x-8 border-[#c5a6ce] bg-white">
      <div className="flex min-h-0 flex-1">
        <textarea aria-label="脚本" readOnly defaultValue={"\nuse database myfriend;\ncreate index f_id_index on myfriend id;"} className="flex-1 resize-none overflow-hidden pt-[11px] pl-[3px] text-[16px] leading-[21px] text-[#1a1a1a] outline-none" />
        <div className="flex w-[17px] flex-col bg-[#dfdce1]">
          <span className="flex-1" />
          <button aria-label="向下滚动" className="flex h-[18px] items-center justify-center border border-[#d3d0d5] bg-white"><ChevronDown className="h-3 w-3 text-[#555]" strokeWidth={3} /></button>
        </div>
      </div>
      <div className="mr-[17px] flex h-[17px] shrink-0 border border-[#d3d0d5]">
        <button aria-label="向左滚动" className="flex w-[17px] items-center justify-center border-r border-[#d3d0d5]"><ChevronLeft className="h-3 w-3 text-[#777]" /></button>
        <span className="flex-1" />
        <button aria-label="向右滚动" className="flex w-[17px] items-center justify-center border-l border-[#d3d0d5]"><ChevronRight className="h-3 w-3 text-[#777]" /></button>
      </div>
      <footer className="flex h-[23px] shrink-0 border-t-2 border-[#b5b2b7] text-[12px]">
        <span className="flex-1" />
        <span className="w-[229px] border-l border-[#d3d0d5] pt-[2px] pl-4">第 1 行，第 1 列</span>
      </footer>
    </section>
  );
}

export default function App() {
  return (
    <main className="relative h-screen overflow-hidden bg-[#0e0d13] font-['Open_Sans','Noto_Sans_CJK_SC',sans-serif]">
      <StudioWindow />
      <ExplorerWindow />
      <div className="absolute bottom-[102px] left-0 h-[10px] w-[130px] bg-[#c5a6ce]" />
      <EditorWindow />
      <WordWindow />
      <div className="pointer-events-none absolute bottom-[118px] left-0 w-[1613px] text-center font-['Lato','Noto_Sans_CJK_SC',sans-serif] text-[72px] leading-[92px] font-medium whitespace-nowrap text-white [-webkit-text-stroke:8px_#111] [paint-order:stroke_fill]">
        <p>实际应用所学习到的数据结构预算法知识</p>
        <p>使用编译原理的知识实现对简单sql语句的解析</p>
      </div>
    </main>
  );
}
